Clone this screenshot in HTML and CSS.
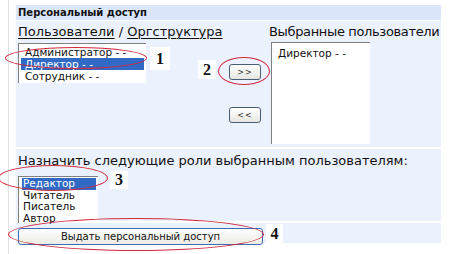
FILE: index.html
```html
<!DOCTYPE html>
<html lang="ru">
<head>
    <meta charset="UTF-8">
    <title>Персональный доступ</title>
    <link rel="stylesheet" href="styles.css">
</head>
<body>
    <div class="page">
        <div class="panel">
            <div class="panel-title">Персональный доступ</div>

            <div class="row users-row">
                <div class="col-left">
                    <div class="col-label"><u>Пользователи</u> / <u>Оргструктура</u></div>
                    <div class="listbox users-list">
                        <div class="opt">Администратор - -</div>
                        <div class="opt selected">Директор - -</div>
                        <div class="opt">Сотрудник - -</div>
                    </div>
                </div>
                <div class="col-buttons">
                    <button class="move-btn btn-add">&gt;&gt;</button>
                    <button class="move-btn btn-remove">&lt;&lt;</button>
                </div>
                <div class="col-right">
                    <div class="col-label right-label">Выбранные пользователи</div>
                    <div class="listbox selected-list">
                        <div class="opt">Директор - -</div>
                    </div>
                </div>
            </div>

            <div class="row roles-row">
                <div class="col-label">Назначить следующие роли выбранным пользователям:</div>
                <div class="listbox roles-list">
                    <div class="opt selected">Редактор</div>
                    <div class="opt">Читатель</div>
                    <div class="opt">Писатель</div>
                    <div class="opt">Автор</div>
                </div>
            </div>

            <div class="row submit-row">
                <button class="submit-btn">Выдать персональный доступ</button>
            </div>
        </div>

        <!-- annotations -->
        <div class="mark mark-1"></div>
        <div class="mark mark-2"></div>
        <div class="mark mark-3"></div>
        <div class="mark mark-4"></div>
        <div class="step step-1">1</div>
        <div class="step step-2">2</div>
        <div class="step step-3">3</div>
        <div class="step step-4">4</div>
    </div>
</body>
</html>
```

FILE: styles.css
```css
body {
    margin: 0;
    background: #ffffff;
    font-family: "DejaVu Sans", Verdana, sans-serif;
    color: #111111;
}
.page {
    position: relative;
    width: 452px;
    height: 254px;
    overflow: hidden;
}
.panel {
    margin-left: 8px;
    padding-top: 5px;
    padding-left: 7px;
    border-left: 1px solid #e2e2e2;
    height: 249px;
    width: 425px;
}
.panel-title {
    background-color: #dbe6fa;
    height: 15px;
    line-height: 16px;
    font-size: 10px;
    font-weight: bold;
    padding-left: 2px;
    margin-bottom: 1px;
}
.row {
    background-color: #ebf1fd;
    padding-left: 2px;
    margin-bottom: 2px;
}
.users-row {
    display: flex;
    height: 126px;
}
.col-label {
    font-size: 13px;
    line-height: 16px;
    white-space: nowrap;
}
.col-label u {
    text-decoration-thickness: 1px;
    text-underline-offset: 2px;
}
.col-left {
    flex: 0 0 211px;
    padding-top: 3px;
}
.col-left .col-label {
    margin-bottom: 3px;
}
.listbox {
    background: #ffffff;
    border-top: 1px solid #7f7f7f;
    border-left: 1px solid #7f7f7f;
    font-size: 10.5px;
    box-sizing: border-box;
}
.opt {
    height: 12px;
    line-height: 12px;
    padding-left: 4px;
    margin: 0 2px 0 2px;
    white-space: nowrap;
}
.opt.selected {
    background-color: #316ac5;
    color: #ffffff;
}
.users-list {
    width: 128px;
    height: 40px;
    padding-top: 2px;
}
.col-buttons {
    flex: 0 0 40px;
    display: flex;
    flex-direction: column;
    align-items: flex-start;
    padding-top: 43px;
}
.move-btn {
    width: 32px;
    height: 16px;
    padding: 0;
    font-family: "DejaVu Sans", Verdana, sans-serif;
    font-size: 8px;
    letter-spacing: 1px;
    color: #333333;
    background: linear-gradient(#ffffff, #e6e6e0);
    border: 1px solid #4a5d78;
    border-radius: 3px;
}
.btn-remove {
    margin-top: 27px;
}
.col-right {
    flex: 1 1 auto;
    min-width: 0;
    padding-top: 3px;
}
.col-right .col-label {
    margin-bottom: 2px;
}
.right-label {
    letter-spacing: -0.35px;
}
.selected-list {
    margin-left: 2px;
    width: 99px;
    height: 102px;
    padding-top: 4px;
}
.roles-row {
    height: 72px;
    padding-top: 4px;
    box-sizing: border-box;
}
.roles-list {
    margin-top: 7px;
    width: 80px;
    height: 48px;
    padding-top: 1px;
}
.roles-list .opt {
    height: 11.5px;
    line-height: 11.5px;
    margin-left: 3px;
    padding-left: 1px;
}
.submit-row {
    height: 20px;
    padding-top: 2px;
    box-sizing: border-box;
}
.submit-btn {
    width: 245px;
    height: 17px;
    padding: 0;
    font-family: "DejaVu Sans", Verdana, sans-serif;
    font-size: 10px;
    color: #111111;
    background: linear-gradient(#ffffff, #ecebe4);
    border: 1px solid #3c6bb4;
    border-radius: 3px;
}
.mark {
    position: absolute;
    border: 1px solid #d2283c;
    border-radius: 50%;
}
.mark-1 { left: 5px; top: 47px; width: 140px; height: 20px; }
.mark-2 { left: 218px; top: 57px; width: 50px; height: 26px; }
.mark-3 { left: -2px; top: 165px; width: 108px; height: 24px; }
.mark-4 { left: 8px; top: 218px; width: 254px; height: 31px; }
.step {
    position: absolute;
    background: #ffffff;
    font-family: "Liberation Serif", "Times New Roman", serif;
    font-weight: bold;
    font-size: 16px;
    text-align: center;
}
.step-1 { left: 150px; top: 47px; width: 20px; height: 23px; line-height: 23px; }
.step-2 { left: 198px; top: 60px; width: 18px; height: 19px; line-height: 19px; }
.step-3 { left: 110px; top: 171px; width: 18px; height: 18px; line-height: 18px; }
.step-4 { left: 266px; top: 224px; width: 17px; height: 20px; line-height: 20px; }
```
